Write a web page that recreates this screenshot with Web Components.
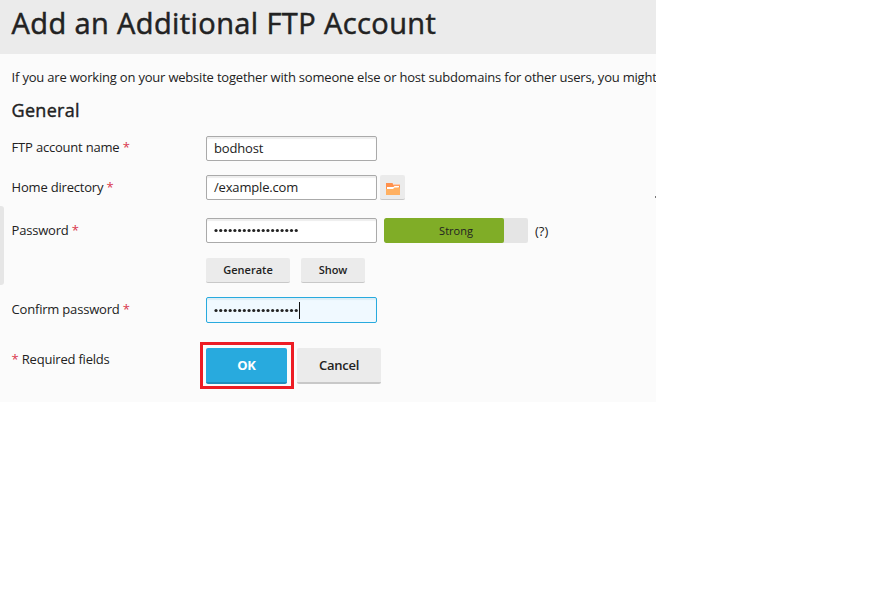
<!DOCTYPE html>
<html lang="en"><head><meta charset="utf-8"><title>Add an Additional FTP Account</title>
<style>
html,body{margin:0;background:#fff}
body{font:13px/18px "Open Sans",sans-serif;color:#222}
</style></head><body>
<ftp-page></ftp-page>
<script>
function define(name, html, setup) {
  const t = document.createElement('template');
  t.innerHTML = html;
  customElements.define(name, class extends HTMLElement {
    connectedCallback() {
      if (this.shadowRoot) return;
      const root = this.attachShadow({mode: 'open'});
      root.append(t.content.cloneNode(true));
      if (setup) setup(this, root);
    }
  });
}

define('page-header', `<style>
:host{display:block;height:54px;background:#ebebeb;box-sizing:border-box;padding:3px 0 0 11.5px}
h1{margin:0;font-size:29px;line-height:40px;font-weight:400;-webkit-text-stroke:.5px #222;white-space:nowrap;letter-spacing:.4px}
</style><h1><slot></slot></h1>`);

define('required-mark', `<style>:host{color:#d9364c}</style>*`);

define('form-row', `<style>
:host{display:grid;grid-template-columns:194px 1fr;align-items:start}
.label{padding-top:var(--label-top,3px);white-space:nowrap;letter-spacing:-.2px;margin-left:-.4px}
.content{display:flex}
</style><div class="label"><slot name="label"></slot></div><div class="content"><slot></slot></div>`);

define('text-field', `<style>
:host{display:flex;box-sizing:border-box;width:171px;height:25px;border:1px solid #aaa;border-radius:2px;background:#fff;box-shadow:inset 0 2px 1px #eee;padding:2px 7px;line-height:19px;white-space:nowrap;letter-spacing:-.17px}
:host([active]){height:26px;border-color:#28aade;background:#f0f9ff;box-shadow:inset 0 2px 1px #dcedf5;padding-top:3px}
:host([active])::after{content:"";width:1px;height:17px;margin-top:1px;background:#111}
</style><slot></slot>`);

define('password-dots', `<style>
:host{display:block;width:85px;height:19px}
svg{display:block}
</style><svg width="85" height="19" fill="#222"></svg>`, (el, root) => {
  const svg = root.querySelector('svg');
  for (let i = 0; i < 18; i++) {
    const c = document.createElementNS('http://www.w3.org/2000/svg', 'circle');
    c.setAttribute('cx', 2 + i * 4.72);
    c.setAttribute('cy', 9.5);
    c.setAttribute('r', 1.6);
    svg.append(c);
  }
});

define('push-button', `<style>
:host{display:flex;box-sizing:border-box;justify-content:center;align-items:center;width:var(--w,84px);height:25px;background:#ebebeb;border-bottom:1px solid #c8c8c8;border-radius:2px;font-size:11px;font-weight:600}
:host([large]){height:36px;font-size:13px;border-bottom-width:2px;letter-spacing:-.25px}
:host([primary]){background:#28aade;border-bottom-color:#218ebc;color:#fff;font-weight:700}
</style><slot></slot>`);

define('folder-icon', `<style>:host,svg{display:block}</style>
<svg width="14" height="12" viewBox="0 0 14 12"><path d="M0 0h6.500l1 2H14v4H0z" fill="#ff914d"/><path d="M7 1h7v1.200H7.600z" fill="#ffc9a7"/><path d="M1 4h6.500l1-1H13v1.500L8 6H1z" fill="#fff"/><path d="M0 6h7l1.500-1.500H14V12H0z" fill="#ffb061"/></svg>`);

define('strength-meter', `<style>
:host{display:block;position:relative;width:144px;height:25px;background:#e5e5e5;border-radius:2px;overflow:hidden}
.bar{width:120px;height:25px;background:#80ad27;border-radius:2px}
.text{position:absolute;inset:0;text-align:center;font-size:11px;line-height:26px}
</style><div class="bar"></div><div class="text"><slot></slot></div>`);

define('highlight-frame', `<style>
:host{display:block;border:3px solid #ed1c24;padding:3px 4px 2px 3px;margin:-6px 3px 0 -6px}
</style><slot></slot>`);

define('ftp-page', `<style>
:host{display:block;position:relative;width:656px;height:402px;background:#fbfbfb;overflow:hidden}
.body{padding:14px 0 0 12px}
p{margin:0 0 0 -.4px;white-space:nowrap;letter-spacing:-.2px}
h2{margin:13px 0 0 -.5px;font-size:18px;line-height:22px;font-weight:400;-webkit-text-stroke:.4px #222;letter-spacing:.3px}
.handle{position:absolute;left:0;top:206px;width:4px;height:79px;background:#e6e6e6;border-radius:0 3px 3px 0}
.speck{position:absolute;left:655px;top:196px;width:1px;height:2px;background:#777}
</style>
<page-header>Add an Additional FTP Account</page-header>
<div class="body">
<p>If you are working on your website together with someone else or host subdomains for other users, you might</p>
<h2>General</h2>
<form-row style="margin-top:15px;--label-top:2px"><span slot="label">FTP account name <required-mark></required-mark></span><text-field>bodhost</text-field></form-row>
<form-row style="margin-top:14px"><span slot="label">Home directory <required-mark></required-mark></span><text-field>/example.com</text-field><push-button style="--w:25px;margin-left:3px"><folder-icon style="margin-top:3px"></folder-icon></push-button></form-row>
<form-row style="margin-top:18px"><span slot="label">Password <required-mark></required-mark></span><text-field><password-dots></password-dots></text-field><strength-meter style="margin-left:7px">Strong</strength-meter><span style="margin:4px 0 0 7px">(?)</span></form-row>
<form-row style="margin-top:15px"><push-button>Generate</push-button><push-button style="--w:64px;margin-left:11px">Show</push-button></form-row>
<form-row style="margin-top:14px"><span slot="label">Confirm password <required-mark></required-mark></span><text-field active><password-dots></password-dots></text-field></form-row>
<form-row style="margin-top:25px;--label-top:2px"><span slot="label"><required-mark></required-mark> Required fields</span><highlight-frame><push-button large primary style="--w:81px">OK</push-button></highlight-frame><push-button large>Cancel</push-button></form-row>
</div>
<div class="handle"></div><div class="speck"></div>`);
</script></body></html>
